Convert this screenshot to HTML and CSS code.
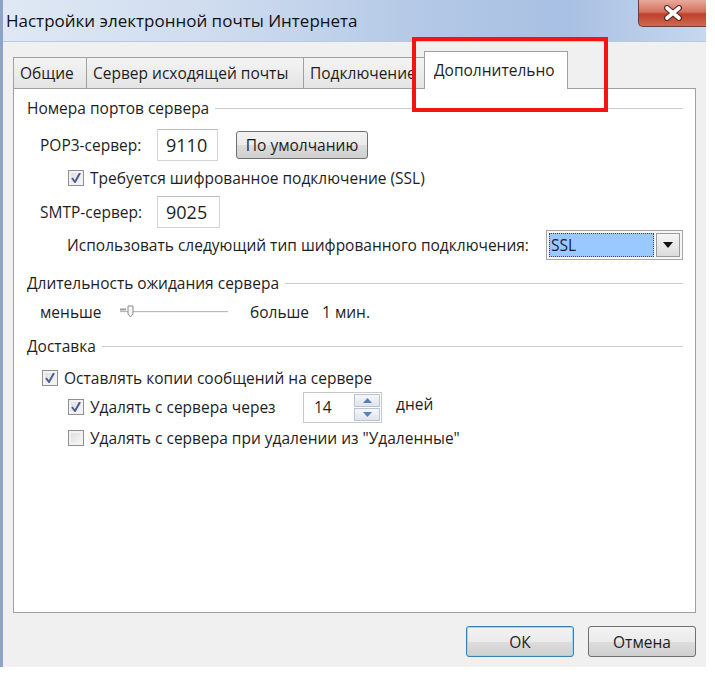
FILE: index.html
```html
<!DOCTYPE html>
<html lang="ru">
<head>
    <meta charset="UTF-8">
    <title>Настройки электронной почты Интернета</title>
    <link rel="stylesheet" href="styles.css">
</head>
<body>
    <div class="window">
        <div class="titlebar">
            <span class="title">Настройки электронной почты Интернета</span>
            <div class="close-btn">
                <svg width="24" height="16" viewBox="0 0 24 16">
                    <path d="M6 3 L18 13 M18 3 L6 13" stroke="#5a2a26" stroke-width="6" stroke-linecap="round"/>
                    <path d="M6 3 L18 13 M18 3 L6 13" stroke="#ffffff" stroke-width="3.6" stroke-linecap="round"/>
                </svg>
            </div>
        </div>

        <div class="frame">
            <div class="tabs">
                <div class="tab t-general">Общие</div>
                <div class="tab t-smtp">Сервер исходящей почты</div>
                <div class="tab t-conn">Подключение</div>
                <div class="tab active">Дополнительно</div>
            </div>

            <div class="panel">
                <div class="group-title g1"><span>Номера портов сервера</span><i></i></div>

                <div class="row port-row r-pop3">
                    <span class="port-label">POP3-сервер:</span>
                    <div class="textbox">9110</div>
                    <button class="push">По умолчанию</button>
                </div>

                <div class="row check-row indent2 r-ssl">
                    <span class="checkbox checked"></span>
                    <span>Требуется шифрованное подключение (SSL)</span>
                </div>

                <div class="row port-row r-smtp">
                    <span class="port-label">SMTP-сервер:</span>
                    <div class="textbox wide">9025</div>
                </div>

                <div class="row enc-row">
                    <span class="enc-label">Использовать следующий тип шифрованного подключения:</span>
                    <div class="combo">
                        <div class="combo-value">SSL</div>
                        <div class="combo-arrow">
                            <svg width="10" height="6" viewBox="0 0 10 6"><path d="M0 0 L10 0 L5 6 Z" fill="#111"/></svg>
                        </div>
                    </div>
                </div>

                <div class="group-title g2"><span>Длительность ожидания сервера</span><i></i></div>

                <div class="row slider-row">
                    <span class="slider-min">меньше</span>
                    <svg class="slider" width="112" height="20" viewBox="0 0 112 20">
                        <line x1="2" y1="9.5" x2="110" y2="9.5" stroke="#b9b9b9"/>
                        <line x1="2" y1="10.5" x2="110" y2="10.5" stroke="#f4f4f4"/>
                        <path d="M2 7.5 L8 7.5" stroke="#9a9a9a" stroke-width="2"/>
                        <path d="M10 4 L15 4 L15 12 L12.5 15 L10 12 Z" fill="#f4f4f4" stroke="#8a8a8a"/>
                    </svg>
                    <span class="slider-max">больше</span>
                    <span>1 мин.</span>
                </div>

                <div class="group-title g3"><span>Доставка</span><i></i></div>

                <div class="row check-row indent1 r-keep">
                    <span class="checkbox checked"></span>
                    <span>Оставлять копии сообщений на сервере</span>
                </div>

                <div class="row check-row indent2 r-days">
                    <span class="checkbox checked"></span>
                    <span class="days-label">Удалять с сервера через</span>
                    <div class="spin">
                        <span class="spin-value">14</span>
                        <div class="spin-btns">
                            <div class="spin-btn">
                                <svg width="9" height="5" viewBox="0 0 9 5"><path d="M0 5 L9 5 L4.5 0 Z" fill="#5b7fb5"/></svg>
                            </div>
                            <div class="spin-btn">
                                <svg width="9" height="5" viewBox="0 0 9 5"><path d="M0 0 L9 0 L4.5 5 Z" fill="#5b7fb5"/></svg>
                            </div>
                        </div>
                    </div>
                    <span class="days-unit">дней</span>
                </div>

                <div class="row check-row indent2 r-deleted">
                    <span class="checkbox"></span>
                    <span>Удалять с сервера при удалении из "Удаленные"</span>
                </div>
            </div>

            <div class="footer">
                <button class="push dlg default">ОК</button>
                <button class="push dlg">Отмена</button>
            </div>
        </div>

        <!-- красная рамка поверх вкладки -->
        <div class="highlight"></div>
    </div>
</body>
</html>
```

FILE: styles.css
```css
body {
    margin: 0;
    background-color: #ffffff;
    font-family: 'Open Sans', 'Noto Sans', sans-serif;
    font-size: 15.5px;
    color: #1e1e1e;
}

.window {
    position: relative;
    width: 703px;
    height: 667px;
    border-left: 3px solid #8ea3c6;
    background-color: #f0f0f0;
    box-sizing: content-box;
}

/* заголовок окна */
.titlebar {
    height: 42px;
    display: flex;
    justify-content: space-between;
    align-items: flex-start;
    background: linear-gradient(to right, #dfe8f4 0%, #cfdcef 30%, #b3c8e6 60%, #a8c0e3 80%, #c7d7ee 100%);
    border-bottom: 1px solid #b9c9df;
    box-sizing: border-box;
}

.title {
    margin: 9px 0 0 3px;
    font-size: 17px;
    color: #111;
}

.close-btn {
    width: 68px;
    height: 27px;
    display: flex;
    align-items: center;
    justify-content: center;
    background: linear-gradient(to bottom, #e9a99c 0%, #d4725f 45%, #c0402c 55%, #cf6a50 100%);
    border: 1px solid #6e3a35;
    border-top: none;
    border-right: none;
    border-radius: 0 0 0 5px;
    box-sizing: border-box;
}

.frame {
    padding: 8px 10px 0 10px;
}

/* вкладки */
.tabs {
    display: flex;
    align-items: flex-end;
    height: 38px;
}

.tab {
    height: 31px;
    padding: 0 6px;
    display: flex;
    align-items: center;
    border: 1px solid #a0a0a0;
    border-right: none;
    border-bottom: none;
    background: linear-gradient(to bottom, #f4f4f4, #e4e4e4);
    box-sizing: border-box;
    white-space: nowrap;
    overflow: hidden;
}

.t-general { width: 73px; }
.t-smtp { width: 217px; }
.t-conn { width: 124px; }

.tab.active {
    position: relative;
    height: 38px;
    width: 144px;
    margin-left: -3px;
    margin-bottom: -1px;
    padding: 7px 9px 0 9px;
    align-items: flex-start;
    background: #ffffff;
    border: 1px solid #a0a0a0;
    border-bottom: none;
}

.panel {
    height: 525px;
    background-color: #ffffff;
    border: 1px solid #a0a0a0;
    padding: 0 12px 0 13px;
    box-sizing: border-box;
}

.group-title {
    display: flex;
    align-items: center;
    height: 20px;
}

.group-title i {
    flex: 1;
    height: 1px;
    margin-left: 6px;
    background-color: #cdcdcd;
}

.g1 { margin-top: 9px; }
.g2 { margin-top: 13px; }
.g3 { margin-top: 14px; }

.row {
    display: flex;
    align-items: center;
    height: 20px;
}

.port-row {
    height: 32px;
    padding-left: 13px;
}

.r-pop3 { margin-top: 11px; }
.r-ssl { margin-top: 7px; }
.r-smtp { margin-top: 8px; }

.port-label {
    width: 117px;
}

.textbox {
    width: 61px;
    height: 32px;
    padding-left: 8px;
    display: flex;
    align-items: center;
    border: 1px solid #d4d4d4;
    border-top-color: #bdbdbd;
    box-sizing: border-box;
    background: #fff;
    font-size: 18px;
}

.textbox.wide {
    width: 63px;
}

.push {
    font-family: inherit;
    font-size: 15.5px;
    color: #1e1e1e;
    height: 28px;
    margin-left: 18px;
    padding: 0 8px;
    border: 1px solid #707070;
    border-radius: 3px;
    background: linear-gradient(to bottom, #f2f2f2 0%, #ebebeb 50%, #dddddd 51%, #cfcfcf 100%);
}

.r-pop3 .push {
    width: 132px;
}

.enc-row {
    height: 30px;
    margin-top: 2px;
    padding-left: 40px;
}

.enc-label {
    flex: 1;
}

.combo {
    width: 137px;
    height: 30px;
    display: flex;
    align-items: center;
    gap: 2px;
    padding: 2px;
    border: 1px solid #a5a5a5;
    box-sizing: border-box;
    background: #f6f6f6;
}

.combo-value {
    flex: 1;
    height: 24px;
    padding-left: 2px;
    display: flex;
    align-items: center;
    background-color: #99c9ff;
    outline: 1px dotted #444;
    outline-offset: -1px;
    color: #1a1a40;
}

.combo-arrow {
    width: 24px;
    height: 24px;
    display: flex;
    align-items: center;
    justify-content: center;
    border: 1px solid #9a9a9a;
    box-sizing: border-box;
    background: linear-gradient(to bottom, #f5f5f5, #dcdcdc);
}

.slider-row {
    margin-top: 9px;
    padding-left: 13px;
}

.slider-min {
    width: 78px;
}

.slider {
    margin-right: 20px;
}

.slider-max {
    width: 72px;
}

/* флажки */
.check-row {
    gap: 6px;
}

.indent1 { padding-left: 15px; }
.indent2 { padding-left: 41px; }

.r-keep { margin-top: 12px; }
.r-days { margin-top: 3px; height: 32px; }
.r-deleted { margin-top: 5px; }

.checkbox {
    width: 16px;
    height: 16px;
    flex-shrink: 0;
    border: 1px solid #8f8f8f;
    box-sizing: border-box;
    background: linear-gradient(135deg, #dcdcdc, #f8f8f8);
    box-shadow: inset 0 0 0 2px #f2f2f2;
}

.checkbox.checked {
    background:
        url("data:image/svg+xml;utf8,<svg xmlns='http://www.w3.org/2000/svg' width='14' height='14' viewBox='0 0 14 14'><path d='M3 7 L6 11 L11 2' fill='none' stroke='%234a5c94' stroke-width='2'/></svg>") center / 14px 14px no-repeat,
        linear-gradient(135deg, #dcdcdc, #f8f8f8);
}

.days-label {
    width: 207px;
}

.spin {
    width: 79px;
    height: 31px;
    display: flex;
    border: 1px solid #c8c8c8;
    box-sizing: border-box;
    background: #fff;
}

.spin-value {
    flex: 1;
    padding-left: 10px;
    display: flex;
    align-items: center;
}

.spin-btns {
    width: 26px;
    display: flex;
    flex-direction: column;
    padding: 1px;
    gap: 1px;
}

.spin-btn {
    flex: 1;
    display: flex;
    align-items: center;
    justify-content: center;
    border: 1px solid #b8c4d4;
    background: linear-gradient(to bottom, #f4f6f9, #dfe5ee);
}

.days-unit {
    margin-left: 8px;
    align-self: flex-start;
    margin-top: 2px;
}

/* нижние кнопки */
.footer {
    display: flex;
    justify-content: flex-end;
    gap: 14px;
    padding-top: 13px;
}

.push.dlg {
    width: 108px;
    height: 31px;
    margin: 0;
}

.push.default {
    border-color: #3c7fb1;
    box-shadow: inset 0 0 0 1px #9bd8f5;
}

.highlight {
    position: absolute;
    left: 409px;
    top: 37px;
    width: 196px;
    height: 75px;
    border: 4px solid #f51414;
    box-sizing: border-box;
}
```
